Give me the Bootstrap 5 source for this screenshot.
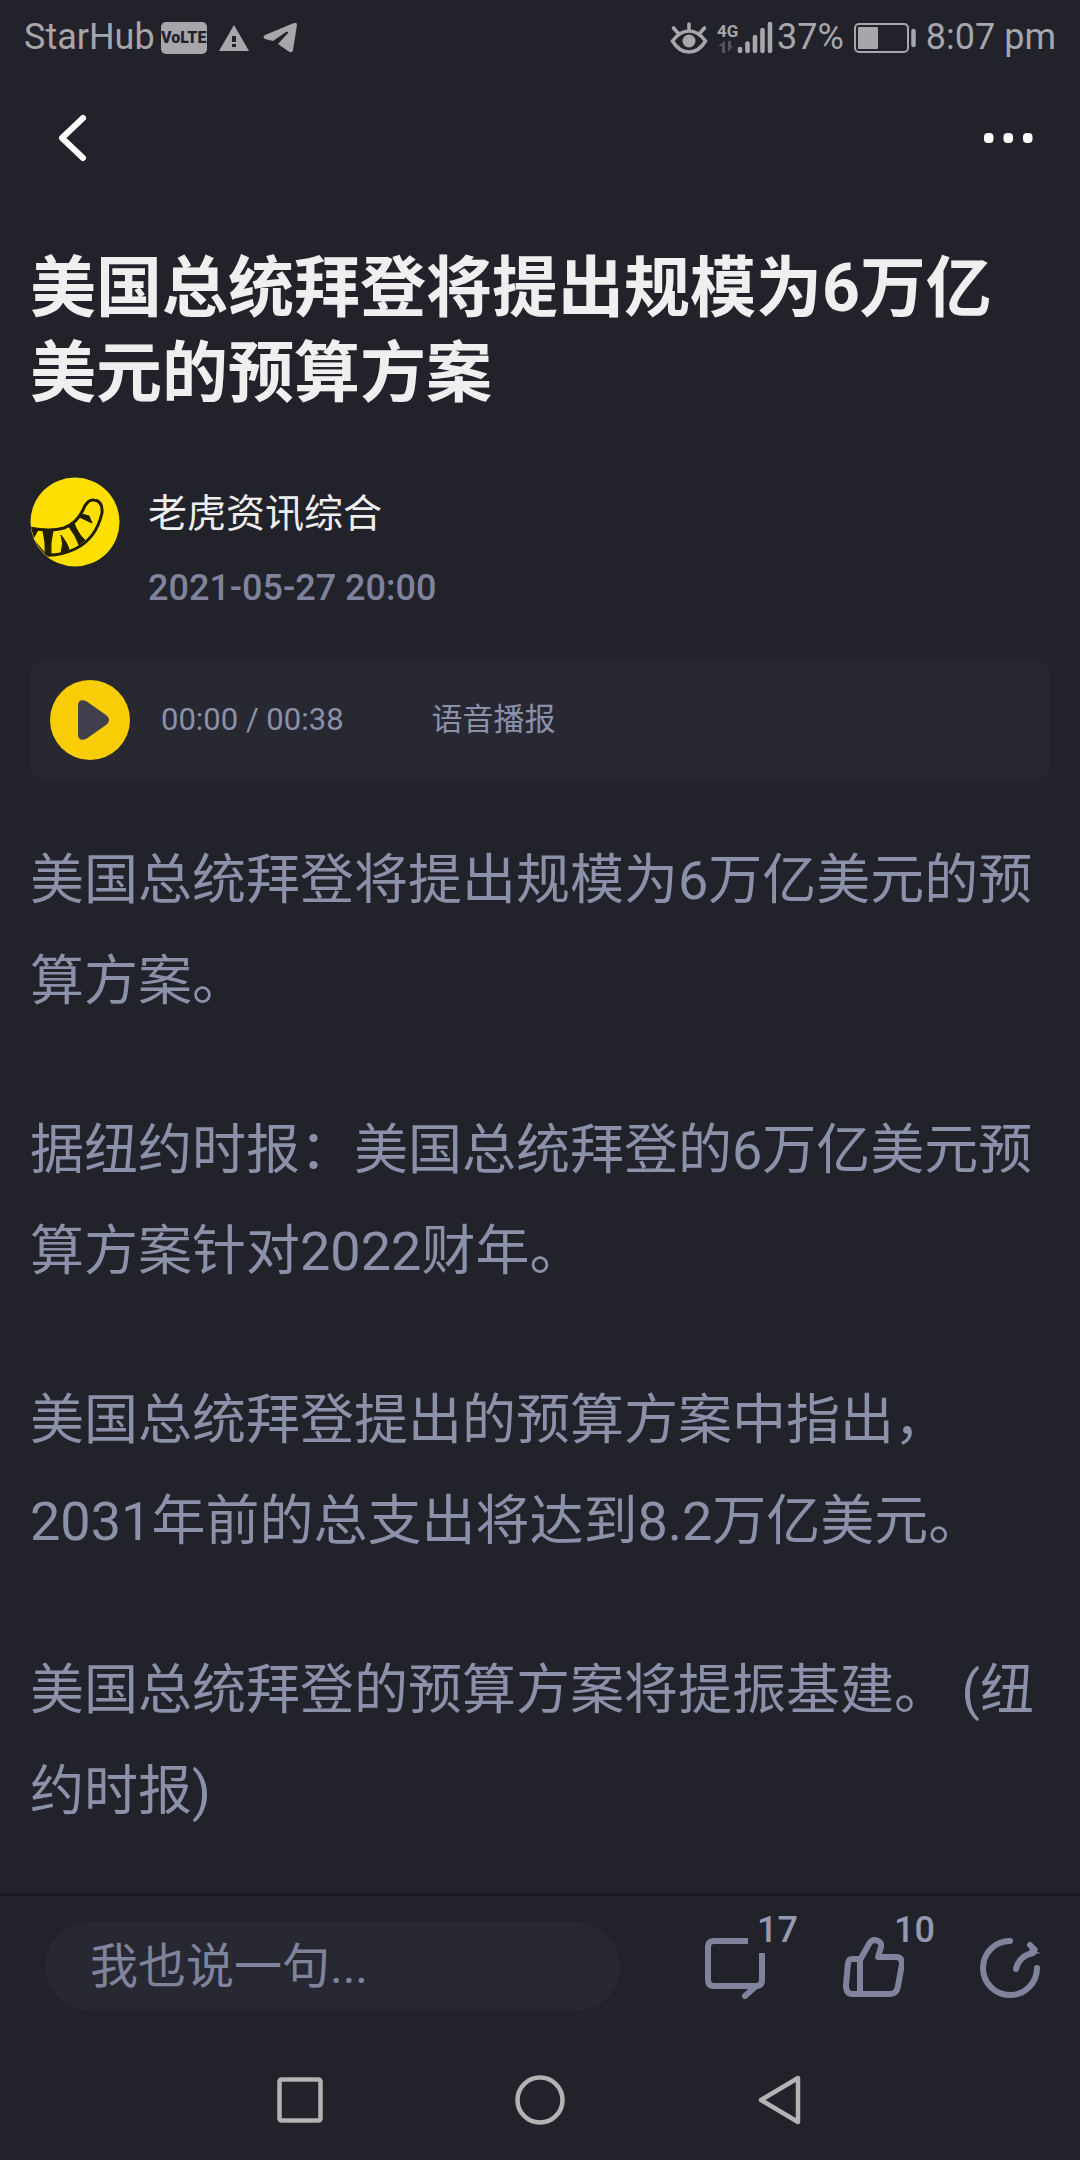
<!DOCTYPE html>
<html lang="zh-CN">
<head>
<meta charset="utf-8">
<meta name="viewport" content="width=device-width, initial-scale=1">
<title>美国总统拜登将提出规模为6万亿美元的预算方案</title>
<link href="https://cdn.jsdelivr.net/npm/bootstrap@5.3.0/dist/css/bootstrap.min.css" rel="stylesheet">
<style>
:root{--ink:#efefef;--copy:#8b91a8;--muted:#80839c;--bg:#22222b;--panel:#282833;--status:#a6a6ab}
body{background:var(--bg);color:var(--copy);font-family:Roboto,"Noto Sans CJK SC",sans-serif}
svg{display:block;flex:none}
.btn{--bs-btn-padding-x:0px;--bs-btn-padding-y:0px;--bs-btn-border-width:0px;--bs-btn-line-height:1}
.status-bar{height:75px;padding:0 24px;color:var(--status);font-size:36px;line-height:75px}
.volte{width:46px;height:32px;border-radius:5px;background:var(--status);color:var(--bg);font-size:16px;font-weight:900;line-height:32px;margin:0 11px 0 6px}
.net{width:20px;font-size:17px;font-weight:700;line-height:17px}
.top-bar{height:126px;padding:0 44px 0 52px}
.story{padding:45px 30px 0}
.headline{color:var(--ink);font-size:66px;font-weight:700;line-height:85px;margin-bottom:61px}
.author{gap:28px;margin-bottom:36px}
.author-name{color:var(--ink);font-size:39px;line-height:75px}
.stamp{color:var(--muted);font-size:36px;font-weight:500;line-height:72px}
.player{height:120px;padding:0 20px;border-radius:16px;background:var(--panel);font-size:31px;margin-bottom:50px}
.clock{margin:0 88px 0 31px}
.copy p{font-size:54px;line-height:101px;margin-bottom:68px}
.copy p:last-child{margin-bottom:32px}
.page-foot{background:var(--bg)}
.reply-bar{border-top:3px solid #171720;padding:26px 39px 29px 45px}
.reply-box,.reply-box:focus{height:89px;padding:0 45px;border:0;border-radius:45px;background:var(--panel);color:var(--copy);font-size:48px;box-shadow:none;margin-right:83px}
.reply-box::placeholder{color:var(--muted);opacity:1}
.actions{gap:73px;color:var(--muted)}
.actions .btn{color:inherit}
.tally{left:54px;top:-23px;font-size:36px;font-weight:500;line-height:36px;color:#9599b0}
.sys-nav{height:120px;color:#b3b3b3}
.sys-nav .btn{width:240px;height:120px;color:inherit}
</style>
</head>
<body>
<div class="d-flex flex-column min-vh-100">
  <div class="status-bar d-flex align-items-center justify-content-between">
    <div class="d-flex align-items-center">
      <span>StarHub</span>
      <span class="volte text-center">VoLTE</span>
      <svg width="32" height="28" viewBox="0 0 32 28" fill="currentColor"><path fill-rule="evenodd" d="M16 1 31 27H1ZM14 12v6h4v-6ZM14 20v3h4v-3Z"/></svg>
      <svg class="ms-2" width="42" height="32" viewBox="-4 0 42 32" fill="currentColor"><path d="M34 1 Q35 1 35 3L31 28Q30 32 26 29L16 22 26 11Q27 9 24 10L11 19 3 17Q0 15 3 13L32 1Z"/></svg>
    </div>
    <div class="d-flex align-items-center">
      <svg class="me-2" width="40" height="34" viewBox="0 0 40 34" fill="none" stroke="currentColor" stroke-width="3.6" stroke-linecap="round"><path d="M3.500 20Q11 10 20 10T36.500 20Q30 31 20 31T3.500 20ZM20 9V3M9 12 4.500 7M31 12l4.500-5"/><circle cx="20" cy="20" r="6.500" fill="currentColor" stroke="none"/></svg>
      <span class="net text-center">4G<svg width="20" height="13" viewBox="0 0 20 13" fill="#55555e"><path d="M8 1v12H5V6H1ZM11 1v11l5-6h-2V1Z"/></svg></span>
      <svg width="36" height="34" viewBox="0 0 36 34" fill="none" stroke="currentColor" stroke-width="4.600" stroke-linecap="round"><path d="M3 30v-2M10.500 30V22.500M18 30V16M25.500 30V9M33 30V3"/></svg>
      <span class="ms-1">37%</span>
      <svg class="ms-2 me-2" width="66" height="32" viewBox="0 0 66 32" fill="none" stroke="currentColor" stroke-width="2"><rect x="3" y="2" width="53" height="28" rx="4"/><rect x="6" y="5" width="20" height="22" rx="1" fill="currentColor" stroke="none"/><path d="M61.500 9v14" stroke-width="4.500" stroke-linecap="round"/></svg>
      <span>8:07 pm</span>
    </div>
  </div>

  <header class="top-bar d-flex align-items-center justify-content-between">
    <button class="btn text-white" type="button" aria-label="返回"><svg width="40" height="52" viewBox="0 0 40 52" fill="none" stroke="currentColor" stroke-width="6" stroke-linecap="round" stroke-linejoin="round"><path d="M31 6 10 26 31 46"/></svg></button>
    <button class="btn text-white" type="button" aria-label="更多"><svg width="56" height="20" viewBox="0 0 56 20" fill="currentColor"><rect x="4" y="5" width="9.500" height="10" rx="4"/><rect x="23.500" y="5" width="9.500" height="10" rx="4"/><rect x="43" y="5" width="9.500" height="10" rx="4"/></svg></button>
  </header>

  <main class="story flex-grow-1">
    <h1 class="headline">美国总统拜登将提出规模为6万亿美元的预算方案</h1>
    <div class="author d-flex">
      <svg width="90" height="90" viewBox="0 0 90 90"><defs><clipPath id="disc"><circle cx="45" cy="45" r="44"/></clipPath></defs><circle cx="45" cy="45" r="44.500" fill="#ffdf00"/><g clip-path="url(#disc)" stroke="#201e00" fill="none"><path d="M0 51Q20 55 34 51 47 46 53 33 57 22 64 23 73 24 72 36 66 62 45 72 30 79 15 78L0 60" stroke-width="3" /><path d="M0 50 8 53 3 62ZM13 54H23Q20 66 21 77L15 79Q16 65 13 54ZM31 58Q38 67 39 73L31 76Q34 66 31 58ZM39 50 44 46Q48 57 55 63L49 68Q46 59 39 50ZM49 40 52 37 59 39 62 46Q56 43 49 40Z" fill="#201e00" stroke-width="1"/></g></svg>
      <div class="d-flex flex-column">
        <span class="author-name">老虎资讯综合</span>
        <time class="stamp" datetime="2021-05-27T20:00">2021-05-27 20:00</time>
      </div>
    </div>
    <div class="player d-flex align-items-center">
      <button class="btn" type="button" aria-label="播放"><svg width="80" height="80" viewBox="0 0 80 80"><circle cx="40" cy="40" r="40" fill="#f9cd05"/><path d="M28 26Q28 18 36 21L56 35Q62 40 56 45L36 59Q28 62 28 54Z" fill="#40414d"/></svg></button>
      <span class="clock">00:00 / 00:38</span>
      <span>语音播报</span>
    </div>
    <div class="copy">
      <p>美国总统拜登将提出规模为6万亿美元的预算方案。</p>
      <p>据纽约时报：美国总统拜登的6万亿美元预算方案针对2022财年。</p>
      <p>美国总统拜登提出的预算方案中指出，2031年前的总支出将达到8.2万亿美元。</p>
      <p>美国总统拜登的预算方案将提振基建。 (纽约时报)</p>
    </div>
  </main>

  <footer class="page-foot sticky-bottom">
    <form class="reply-bar d-flex align-items-center">
      <input class="reply-box form-control" type="text" placeholder="我也说一句..." aria-label="我也说一句">
      <div class="actions d-flex">
        <button class="btn position-relative" type="button" aria-label="评论 17"><svg width="64" height="64" viewBox="0 0 64 64" fill="none" stroke="currentColor" stroke-width="6"><path d="M45 6H11Q5 6 5 12V45Q5 51 11 51H53Q59 51 59 45V18"/><path d="M52 52 42 61" stroke-linecap="round"/></svg><span class="tally position-absolute">17</span></button>
        <button class="btn position-relative" type="button" aria-label="点赞 10"><svg width="64" height="64" viewBox="0 0 64 64" fill="none" stroke="currentColor" stroke-width="6" stroke-linejoin="round"><path d="M20 24H12Q9 24 8 28L6 50Q6 59 12 59H50Q57 59 58 51L62 29Q62 22 56 22H38L41 12Q42 6 35 5 31 5 29 9L20 25V59"/></svg><span class="tally position-absolute">10</span></button>
        <button class="btn" type="button" aria-label="分享"><svg width="64" height="64" viewBox="0 0 64 64" fill="none" stroke="currentColor" stroke-width="6" stroke-linecap="round"><path d="M33 6A27 27 0 1 0 60 33M39 34Q42 21 56 18"/><path d="M53 8 61 14 60 17 64 18 52 20" fill="currentColor" stroke="none"/><path d="M53 10l4 4"/></svg></button>
      </div>
    </form>
    <nav class="sys-nav d-flex justify-content-center">
      <button class="btn d-flex align-items-center justify-content-center" type="button" aria-label="最近任务"><svg width="52" height="52" viewBox="0 0 52 52" fill="none" stroke="currentColor" stroke-width="4.500"><rect x="5.500" y="5.500" width="41" height="41" rx="2"/></svg></button>
      <button class="btn d-flex align-items-center justify-content-center" type="button" aria-label="主屏幕"><svg width="52" height="52" viewBox="0 0 52 52" fill="none" stroke="currentColor" stroke-width="4.500"><circle cx="26" cy="26" r="22.500"/></svg></button>
      <button class="btn d-flex align-items-center justify-content-center" type="button" aria-label="返回上一页"><svg width="52" height="52" viewBox="0 0 52 52" fill="none" stroke="currentColor" stroke-width="4.500" stroke-linejoin="round"><path d="M44 4V48L7 26Z"/></svg></button>
    </nav>
  </footer>
</div>
<script src="https://cdn.jsdelivr.net/npm/bootstrap@5.3.0/dist/js/bootstrap.bundle.min.js"></script>
</body>
</html>
